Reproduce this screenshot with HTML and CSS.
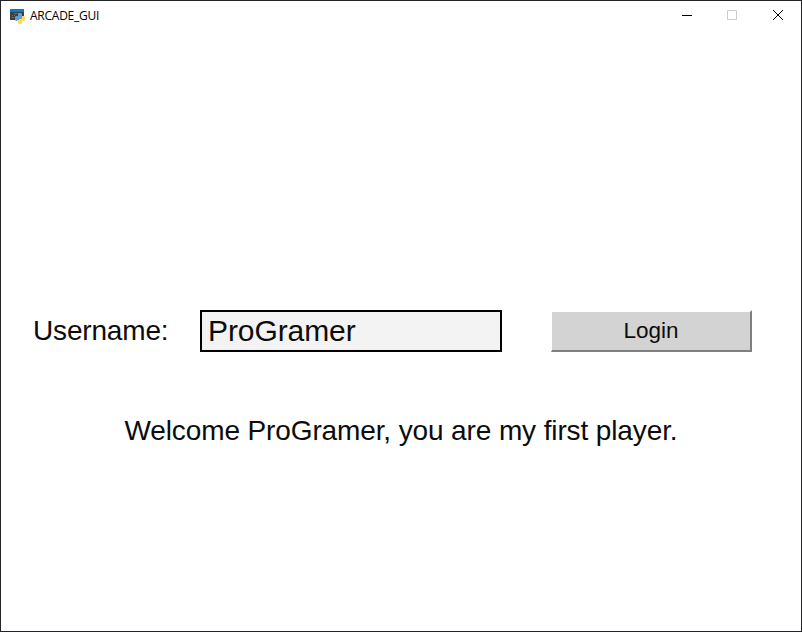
FILE: index.html
```html
<!DOCTYPE html>
<html lang="en">
<head>
<meta charset="utf-8">
<title>ARCADE_GUI</title>
<link rel="stylesheet" href="styles.css">
</head>
<body>
<div class="window">
  <header class="titlebar">
    <svg class="app-icon" width="16" height="16" viewBox="0 0 16 16">
      <path fill="#3b4043" d="M0 1h14v11H0z"/>
      <path fill="#0878d0" d="M0 1h14v3H0z"/>
      <path fill="#3f9150" d="M4 5h3v1H4zM2 7h1v1H2zM4 7h1v1H4zM2 9h2v1H2z"/>
      <path fill="#5b9fd3" d="M8 5h3l1 1v4l-1 1H8l-1 2H6l-1-1V9l1-1h2V6z"/>
      <path fill="#ffd94f" d="M12 8h2l1 1v3l-1 1h-2v2l-1 1H9l-1-1v-3l1-1h2l1-1z"/>
    </svg>
    <h1 class="title">ARCADE_GUI</h1>
    <div class="controls">
      <svg class="control" width="46" height="29" viewBox="0 0 46 29"><path d="M18 14.500h10" stroke="#000"/></svg>
      <svg class="control" width="46" height="29" viewBox="0 0 46 29"><path d="M17.500 9.500h9v9h-9z" fill="none" stroke="#ccc"/></svg>
      <svg class="control" width="46" height="29" viewBox="0 0 46 29"><path d="M17 9l10 10M27 9L17 19" fill="none" stroke="#000"/></svg>
    </div>
  </header>
  <main class="content">
    <form class="login">
      <label class="label" for="username">Username:</label>
      <input class="field" id="username" type="text" value="ProGramer" spellcheck="false">
      <button class="button" type="button">Login</button>
    </form>
    <p class="message">Welcome ProGramer, you are my first player.</p>
  </main>
</div>
</body>
</html>
```
FILE: styles.css
```css
* {
  box-sizing: border-box;
}

body {
  margin: 0;
  background: #fff;
  font-family: "Liberation Sans", Arial, sans-serif;
  color: #0c0c0c;
}

.window {
  display: flex;
  flex-direction: column;
  width: 802px;
  height: 632px;
  border: 1px solid #242426;
  background: #fff;
}

.titlebar {
  display: flex;
  align-items: center;
  height: 29px;
  padding-left: 9px;
}

.app-icon {
  margin-right: 4px;
}

.title {
  margin: 0;
  font: 12px/16px "Open Sans", sans-serif;
  letter-spacing: -0.25px;
  color: #000;
}

.controls {
  display: flex;
  margin: 0 -1px 0 auto;
}

.content {
  flex: 1;
  padding-top: 280px;
}

.login {
  display: flex;
  align-items: center;
  height: 42px;
}

.label {
  flex: none;
  width: 199px;
  padding-left: 32px;
  font-size: 28px;
  line-height: 42px;
  letter-spacing: -0.17px;
}

.field {
  width: 302px;
  height: 42px;
  margin: 0 49px 0 0;
  padding: 0 6px;
  border: 2px solid #000;
  border-radius: 0;
  background: #f3f3f3;
  font: 30px "Liberation Sans", Arial, sans-serif;
  letter-spacing: -0.08px;
  color: #0c0c0c;
}

.button {
  width: 201px;
  height: 42px;
  padding: 0;
  border: solid;
  border-width: 2px 2px 2px 1px;
  border-color: #fff #808080 #808080 #fff;
  background: #d3d3d3;
  font: 22.5px "Liberation Sans", Arial, sans-serif;
  color: #0c0c0c;
}

.message {
  margin: 58px 0 0;
  text-align: center;
  font-size: 28px;
  line-height: 42px;
  letter-spacing: -0.12px;
}
```
